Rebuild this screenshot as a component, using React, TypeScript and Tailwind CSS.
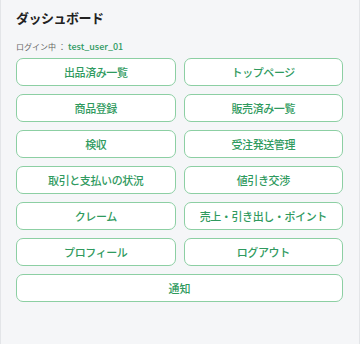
import React from 'react'

const items = [
  '出品済み一覧',
  'トップページ',
  '商品登録',
  '販売済み一覧',
  '検収',
  '受注発送管理',
  '取引と支払いの状況',
  '値引き交渉',
  'クレーム',
  '売上・引き出し・ポイント',
  'プロフィール',
  'ログアウト',
]

const font = { fontFamily: '"Noto Sans CJK JP", "Noto Sans", sans-serif' }

export default function App() {
  return (
    <div className="w-[361px] h-[344px] bg-white flex" style={font}>
      <div className="w-[360px] h-full bg-[#f5f6f8] border-x border-[#e3e5e8] pl-[15px] pr-[16px] pt-[8px]">
        <h1 className="text-[13px] font-semibold text-[#222] leading-[20px] tracking-[-0.5px]">ダッシュボード</h1>
        <div className="mt-[13px] text-[8px] leading-[12px] text-[#666] flex items-center">
          <span>ログイン中</span>
          <span className="mx-[2px]">：</span>
          <span className="text-[#2f9a63] text-[9px] font-medium">test_user_01</span>
        </div>
        <div className="mt-[5px] grid grid-cols-2 gap-x-[8px] gap-y-[8px]">
          {items.map((label) => (
            <button
              key={label}
              className="h-[28px] bg-white border border-[#8ccfa3] rounded-[7px] text-[11px] font-medium text-[#2f9a5e] tracking-[-0.4px]"
            >
              {label}
            </button>
          ))}
          <button className="col-span-2 h-[28px] bg-white border border-[#8ccfa3] rounded-[7px] text-[11px] font-medium text-[#2f9a5e]">
            通知
          </button>
        </div>
      </div>
    </div>
  )
}
